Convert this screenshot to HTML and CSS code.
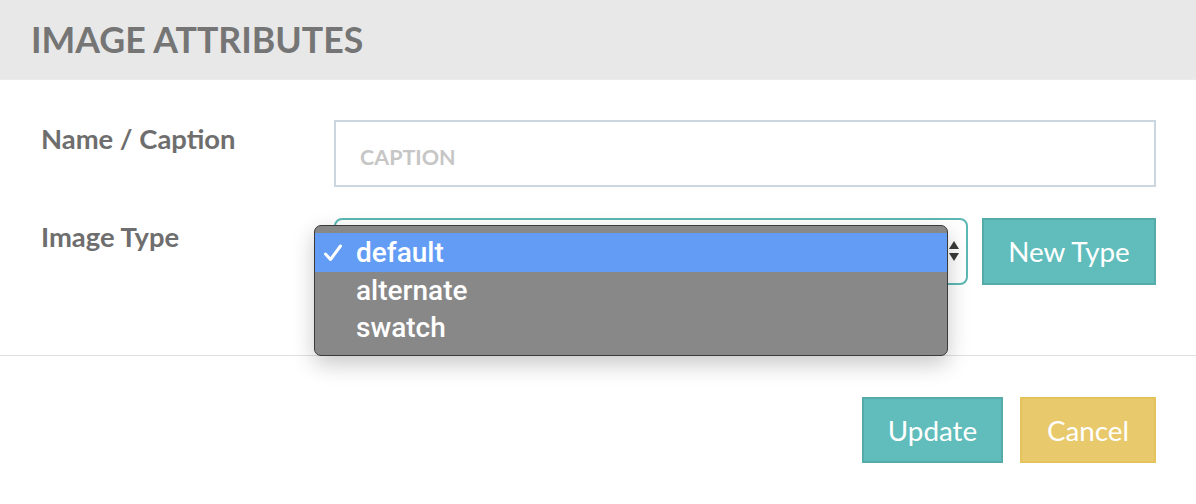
FILE: index.html
```html
<!DOCTYPE html>
<html>
<head>
<meta charset="utf-8">
<link rel="stylesheet" href="styles.css">
</head>
<body>
<div class="modal">
  <div class="header"><h1 class="title">IMAGE ATTRIBUTES</h1></div>
  <div class="body">
    <div class="row">
      <div class="label">Name / Caption</div>
      <div class="field"><div class="input"><span class="placeholder">CAPTION</span></div></div>
    </div>
    <div class="row">
      <div class="label">Image Type</div>
      <div class="field field-select">
        <div class="select">
          <svg class="arrows" width="12" height="24" viewBox="0 0 12 24"><path d="M6 2 L11 10 L1 10 Z" fill="#3a3a3a"/><path d="M6 22 L11 14 L1 14 Z" fill="#3a3a3a"/></svg>
          <div class="popup">
            <div class="opt selected"><svg class="check" width="20" height="20" viewBox="0 0 20 20"><path d="M2.5 11 L7.5 16.5 L17.5 3" fill="none" stroke="#fff" stroke-width="3" stroke-linecap="round" stroke-linejoin="round"/></svg>default</div>
            <div class="opt">alternate</div>
            <div class="opt">swatch</div>
          </div>
        </div>
        <button class="btn btn-teal btn-new">New Type</button>
      </div>
    </div>
  </div>
  <div class="footer">
    <button class="btn btn-teal btn-update">Update</button>
    <button class="btn btn-yellow btn-cancel">Cancel</button>
  </div>
</div>
</body>
</html>
```

FILE: styles.css
```css
* { box-sizing: border-box; }
html, body { margin: 0; padding: 0; background: #fff; }
body { font-family: Lato, "Open Sans", sans-serif; width: 1196px; height: 504px; overflow: hidden; }
.header {
  height: 80px;
  background: #e8e8e8;
  border-bottom: 1px solid #ececec;
  padding-left: 31px;
  display: flex;
  align-items: center;
}
.title {
  margin: 0;
  font-size: 35.7px;
  font-weight: 700;
  color: #757575;
  letter-spacing: 0;
}
.body {
  padding: 40px 40px 70px 41px;
  border-bottom: 1px solid #e0e0e0;
  display: flex;
  flex-direction: column;
  gap: 31px;
}
.row { display: flex; height: 67px; }
.label {
  width: 293px;
  font-size: 27.4px;
  font-weight: 700;
  color: #6e6e6e;
  padding-top: 2px;
}
.field { flex: 1; display: flex; gap: 14px; }
.input {
  flex: 1;
  border: 2px solid #ccd6de;
  display: flex;
  align-items: center;
  padding-left: 24px;
  padding-top: 6px;
}
.placeholder { font-size: 21.5px; color: #c6c6c6; font-weight: 700; }
.select {
  position: relative;
  width: 634px;
  border: 2px solid #5cb8b4;
  border-radius: 8px;
}
.arrows { position: absolute; right: 6px; top: 19px; }
.popup {
  position: absolute;
  left: -22px;
  top: 5px;
  width: 634px;
  height: 131px;
  background: #888888;
  border: 1px solid #3a3a3a;
  border-radius: 7px;
  box-shadow: 0 8px 22px rgba(0,0,0,0.22);
  padding-top: 7px;
  font-family: Roboto, "Liberation Sans", sans-serif;
  font-weight: 500;
  font-size: 28px;
  color: #fff;
}
.opt { height: 37px; display: flex; align-items: center; padding-left: 41px; position: relative; }
.opt.selected { background: #639cf5; height: 39px; }
.check { position: absolute; left: 8px; top: 10px; }
.btn {
  font-family: Lato, sans-serif;
  font-size: 27.8px;
  font-weight: 400;
  color: #fff;
  cursor: pointer;
  height: 67px;
}
.btn-teal { background: #60bdbb; border: 2px solid #54aba8; }
.btn-yellow { background: #e8c96b; border: 2px solid #e4c25c; }
.btn-new { width: 174px; }
.footer {
  display: flex;
  justify-content: flex-end;
  gap: 17px;
  padding: 41px 40px 0 0;
}
.btn-update { width: 141px; height: 66px; }
.btn-cancel { width: 136px; height: 66px; }
```
